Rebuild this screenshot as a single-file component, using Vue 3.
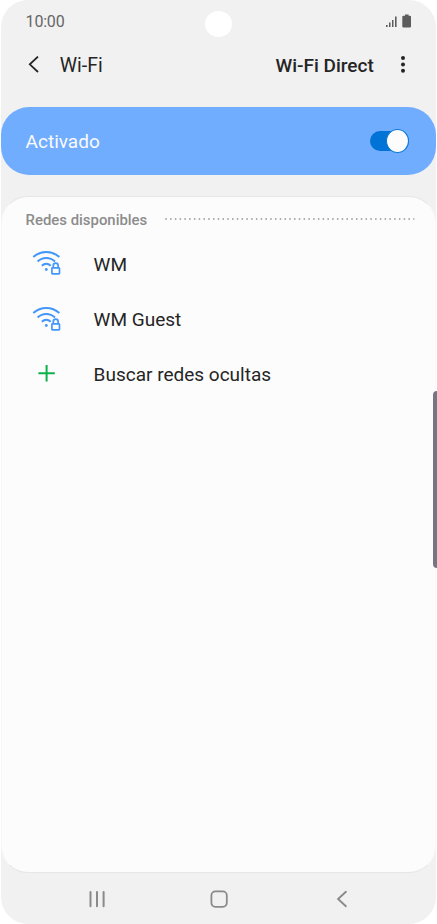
<script setup>
const networks = ['WM', 'WM Guest']
</script>

<template>
  <main class="phone">
    <div class="camera"></div>
    <header class="status">
      <span class="time">10:00</span>
      <svg class="indicators" width="28" height="16" viewBox="0 0 28 16" fill="#5c5c5c">
        <path d="M1 11h1.6v2H1zM4 8.4h1.5V13H4zM7 6h1.5v7H7zM10 2.5h1.6V13H10z" />
        <path d="M20 .5h3.6v1.3H25a1 1 0 0 1 1 1v9.7a1 1 0 0 1-1 1h-6.7a1 1 0 0 1-1-1V2.8a1 1 0 0 1 1-1H20z" />
      </svg>
    </header>

    <nav class="toolbar">
      <svg class="back" width="12" height="18" viewBox="0 0 12 18">
        <path d="M11 .6 2.8 8.3 11 16" fill="none" stroke="#252525" stroke-width="1.8" />
      </svg>
      <h1 class="title">Wi-Fi</h1>
      <span class="direct">Wi-Fi Direct</span>
      <svg class="more" width="6" height="18" viewBox="0 0 6 18" fill="#252525">
        <circle cx="3" cy="2" r="2" />
        <circle cx="3" cy="8.4" r="2" />
        <circle cx="3" cy="14.8" r="2" />
      </svg>
    </nav>

    <section class="master">
      <span class="state">Activado</span>
      <span class="switch"><span class="knob"></span></span>
    </section>

    <section class="panel">
      <div class="heading">
        <h2 class="caption">Redes disponibles</h2>
        <svg class="dots" width="251" height="2" viewBox="0 0 251 2">
          <path d="M.3 1H250" stroke="#929292" stroke-width="1.5" stroke-dasharray="1.5 3.28" />
        </svg>
      </div>
      <ul class="list">
        <li v-for="name in networks" :key="name" class="row">
          <svg class="wifi" width="30" height="26" viewBox="0 0 30 26" fill="none" stroke="#4297fa">
            <path d="M1.3 7.1C8.8 .3 19.8 .3 27.3 7.1" stroke-width="2" />
            <path d="M5.6 11.5C10.6 6.8 18 6.8 23 11.5" stroke-width="2" />
            <path d="M9.9 15.8c2.6-2.6 6.2-2.6 8.8 0" stroke-width="2" />
            <circle cx="14.3" cy="19.5" r="1.4" fill="#4297fa" stroke="none" />
            <rect x="19.9" y="17.8" width="7.6" height="6" rx=".6" stroke-width="1.7" />
            <path d="M21.3 17.6v-2a2.4 2.4 0 0 1 4.8 0v2" stroke-width="1.7" />
          </svg>
          <span class="name">{{ name }}</span>
        </li>
        <li class="row">
          <svg class="plus" width="18" height="18" viewBox="0 0 18 18">
            <path d="M8.6 1.1v16.4M.4 9.3h16.4" stroke="#0cb14b" stroke-width="2" />
          </svg>
          <span class="name">Buscar redes ocultas</span>
        </li>
      </ul>
    </section>

    <footer class="keys">
      <svg width="18" height="18" viewBox="0 0 18 18">
        <path d="M2.5 2v14.2M9 2v14.2M15.6 2v14.2" fill="none" stroke="#8a8a8a" stroke-width="2" stroke-linecap="round" />
      </svg>
      <svg width="18" height="18" viewBox="0 0 18 18">
        <rect x="1.4" y="1.4" width="15.4" height="15.4" rx="4" fill="none" stroke="#8a8a8a" stroke-width="1.8" />
      </svg>
      <svg width="18" height="18" viewBox="0 0 18 18">
        <path d="M12.9 1.8 5.1 9l7.8 7.2" fill="none" stroke="#8a8a8a" stroke-width="1.9" stroke-linecap="round" />
      </svg>
    </footer>
  </main>
  <div class="edge"></div>
</template>

<style>
body {
  margin: 0;
  background: #fff;
}
#app {
  position: relative;
  overflow: hidden;
}
</style>

<style scoped>
.phone {
  position: relative;
  box-sizing: border-box;
  width: 435px;
  height: 924px;
  margin-left: 1px;
  overflow: hidden;
  display: flex;
  flex-direction: column;
  border-radius: 27px;
  background: #f1f1f1;
  color: #252525;
  font-family: Roboto, sans-serif;
}
.camera {
  position: absolute;
  left: 204px;
  top: 11px;
  width: 27px;
  height: 26px;
  border-radius: 50%;
  background: #fff;
}
.status {
  flex: none;
  box-sizing: border-box;
  height: 42px;
  display: flex;
  align-items: center;
  justify-content: space-between;
  padding: 2px 23px 0 24.6px;
}
.time {
  color: #666;
  font-size: 16px;
  line-height: 20px;
  letter-spacing: -.2px;
}
.toolbar {
  flex: none;
  box-sizing: border-box;
  height: 46px;
  display: flex;
  align-items: center;
  padding: 1px 30px 0 26px;
}
.back {
  margin-bottom: 1px;
}
.title {
  margin: 0 auto 0 20.8px;
  font-size: 19.5px;
  font-weight: 400;
  line-height: 25px;
}
.direct {
  font-size: 19px;
  font-weight: 500;
  line-height: 25px;
}
.more {
  margin: 0 0 2px 26.3px;
}
.master {
  flex: none;
  box-sizing: border-box;
  height: 68px;
  margin-top: 19px;
  display: flex;
  align-items: center;
  justify-content: space-between;
  padding: 0 27.5px 0 24.6px;
  border-radius: 28px;
  background: #70adff;
}
.state {
  padding-top: 2px;
  color: #fafafa;
  font-size: 19px;
  line-height: 24px;
}
.switch {
  display: flex;
  align-items: center;
  justify-content: flex-end;
  width: 38.5px;
  height: 20px;
  border-radius: 10px;
  background: #0074d6;
}
.knob {
  flex: none;
  box-sizing: border-box;
  width: 23px;
  height: 24px;
  border: 1px solid #0878d8;
  border-radius: 50%;
  background: #fcfcfc;
}
.panel {
  flex: none;
  box-sizing: border-box;
  height: 677px;
  margin-top: 21px;
  border: 1px solid #e6e6e6;
  border-left-color: #f7f7f7;
  border-right-color: #f7f7f7;
  border-radius: 27px;
  background: #fcfcfc;
}
.heading {
  height: 39px;
  display: flex;
  align-items: center;
  padding: 7px 20px 0 23.6px;
  box-sizing: border-box;
}
.caption {
  width: 139.4px;
  margin: 0;
  color: #8c8c8c;
  font-size: 14.9px;
  font-weight: 500;
  line-height: 20px;
  white-space: nowrap;
}
.dots {
  margin-bottom: 2px;
}
.list {
  margin: 0;
  padding: 0;
  list-style: none;
}
.row {
  height: 55.3px;
  display: flex;
  align-items: center;
}
.wifi {
  margin: 0 31.6px .6px 30px;
}
.plus {
  margin: 0 37.6px 2px 36px;
}
.name {
  padding-top: 2px;
  font-size: 19px;
  line-height: 24px;
}
.keys {
  height: 51px;
  display: flex;
  align-items: center;
  justify-content: space-between;
  padding: 1px 85px 0 86.5px;
}
.edge {
  position: absolute;
  right: -4px;
  top: 391px;
  width: 8px;
  height: 177px;
  border-radius: 4px;
  background: #777582;
}
</style>
